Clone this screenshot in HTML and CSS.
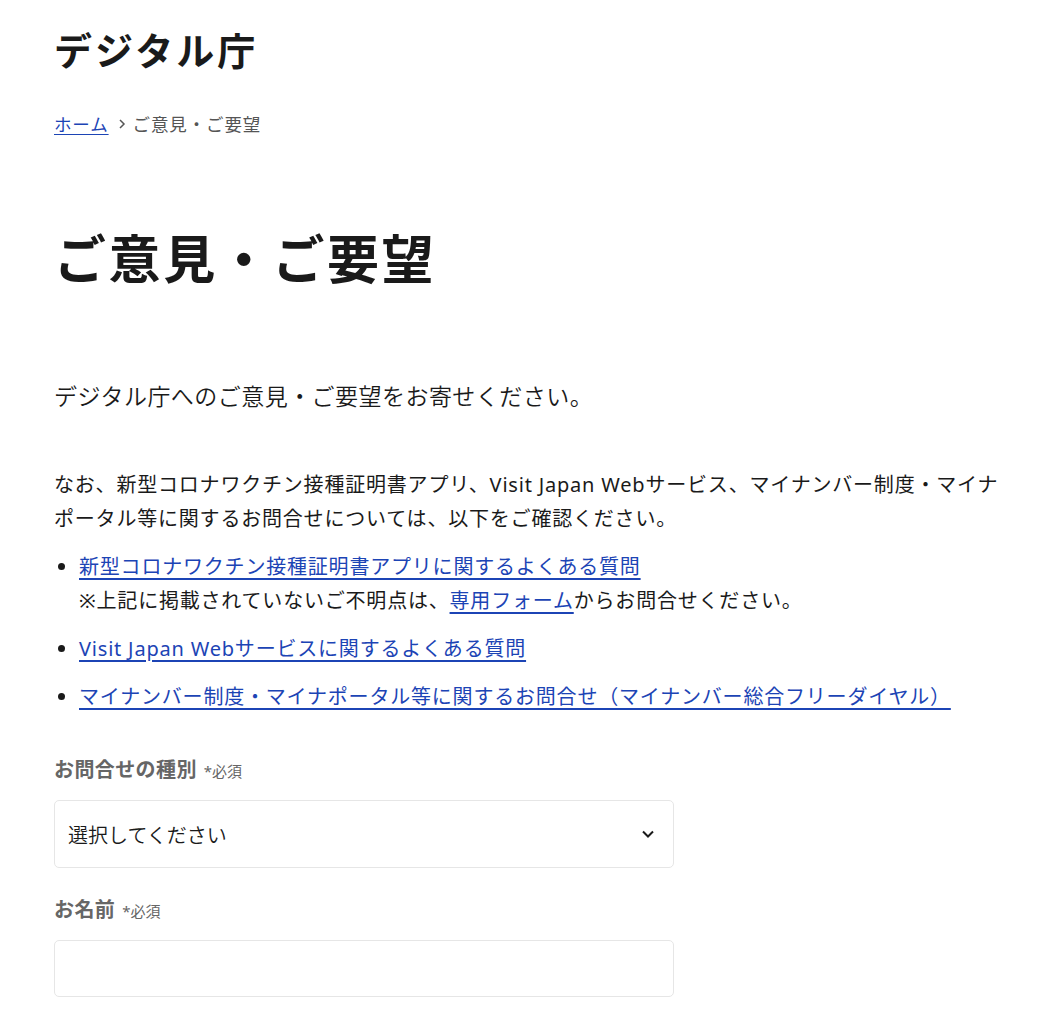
FILE: index.html
```html
<!DOCTYPE html>
<html lang="ja">
<head>
<meta charset="utf-8">
<title>ご意見・ご要望 | デジタル庁</title>
<link rel="stylesheet" href="styles.css">
</head>
<body>
<div class="page">
  <header class="site-header">
    <div class="logo">デジタル庁</div>
  </header>
  <nav class="breadcrumb">
    <a href="#">ホーム</a>
    <svg class="sep" width="8" height="12" viewBox="0 0 8 12"><polyline points="2,2 6,6 2,10" fill="none" stroke="#555" stroke-width="1.5"/></svg>
    <span class="current">ご意見・ご要望</span>
  </nav>
  <main>
    <h1 class="title">ご意見・ご要望</h1>
    <p class="lead">デジタル庁へのご意見・ご要望をお寄せください。</p>
    <p class="body-text">なお、新型コロナワクチン接種証明書アプリ、Visit Japan Webサービス、マイナンバー制度・マイナポータル等に関するお問合せについては、以下をご確認ください。</p>
    <ul class="links">
      <li><a href="#">新型コロナワクチン接種証明書アプリに関するよくある質問</a><br>※上記に掲載されていないご不明点は、<a href="#">専用フォーム</a>からお問合せください。</li>
      <li><a href="#">Visit Japan Webサービスに関するよくある質問</a></li>
      <li><a href="#">マイナンバー制度・マイナポータル等に関するお問合せ（マイナンバー総合フリーダイヤル）</a></li>
    </ul>
    <form class="form">
      <div class="field">
        <label class="label">お問合せの種別<span class="req">*必須</span></label>
        <div class="select">
          <span class="select-text">選択してください</span>
          <svg class="chev" width="14" height="10" viewBox="0 0 14 10"><polyline points="2,2.5 7,7.5 12,2.5" fill="none" stroke="#1a1a1a" stroke-width="2"/></svg>
        </div>
      </div>
      <div class="field">
        <label class="label">お名前<span class="req">*必須</span></label>
        <div class="input"></div>
      </div>
    </form>
  </main>
</div>
</body>
</html>
```

FILE: styles.css
```css
html, body {
  margin: 0;
  padding: 0;
  background: #fff;
}
body {
  font-family: "Noto Sans", "Noto Sans CJK JP", sans-serif;
  color: #1a1a1a;
}
.page {
  padding: 22px 54px 40px;
}
.site-header .logo {
  font-size: 38px;
  font-weight: 700;
  line-height: 57px;
  letter-spacing: 3px;
  color: #1a1a1a;
}
.breadcrumb {
  margin-top: 32px;
  font-size: 17.5px;
  line-height: 26px;
  letter-spacing: 0.05em;
  color: #555;
  display: flex;
  align-items: center;
  gap: 7px;
}
.breadcrumb a {
  color: #1c44b5;
  text-decoration: underline;
  text-underline-offset: 3px;
}
.breadcrumb .sep {
  display: block;
  margin-left: 2px;
}
.title {
  margin: 85px 0 0;
  font-size: 52px;
  font-weight: 700;
  line-height: 73px;
  letter-spacing: 0.05em;
  color: #1a1a1a;
}
.lead {
  margin: 83px 0 0;
  font-size: 23px;
  font-weight: 350;
  line-height: 37px;
  letter-spacing: 0.02em;
  color: #1a1a1a;
}
.body-text {
  margin: 53px 0 0;
  font-size: 20px;
  line-height: 34px;
  letter-spacing: 0.04em;
}
.links {
  margin: 14px 0 0;
  padding-left: 25px;
  font-size: 20px;
  line-height: 34px;
  letter-spacing: 0.04em;
}
.links li + li {
  margin-top: 14px;
}
.links a {
  color: #1c44b5;
  text-decoration: underline;
  text-underline-offset: 4px;
  text-decoration-thickness: 1.5px;
}
.form {
  margin-top: 42px;
}
.field + .field {
  margin-top: 28px;
}
.label {
  display: flex;
  align-items: baseline;
  font-size: 20px;
  font-weight: 700;
  line-height: 27px;
  color: #666;
  letter-spacing: 0.02em;
}
.req {
  margin-left: 7px;
  font-size: 15px;
  font-weight: 400;
  color: #666;
  letter-spacing: 0;
}
.select {
  margin-top: 15px;
  width: 620px;
  height: 68px;
  box-sizing: border-box;
  border: 1px solid #e6e6e6;
  border-radius: 5px;
  display: flex;
  align-items: center;
  justify-content: space-between;
  padding: 0 18px 0 13px;
}
.select-text {
  font-size: 20px;
  font-weight: 350;
  letter-spacing: 0;
  color: #1a1a1a;
}
.input {
  margin-top: 15px;
  width: 620px;
  height: 57px;
  box-sizing: border-box;
  border: 1px solid #e6e6e6;
  border-radius: 5px;
}
```
